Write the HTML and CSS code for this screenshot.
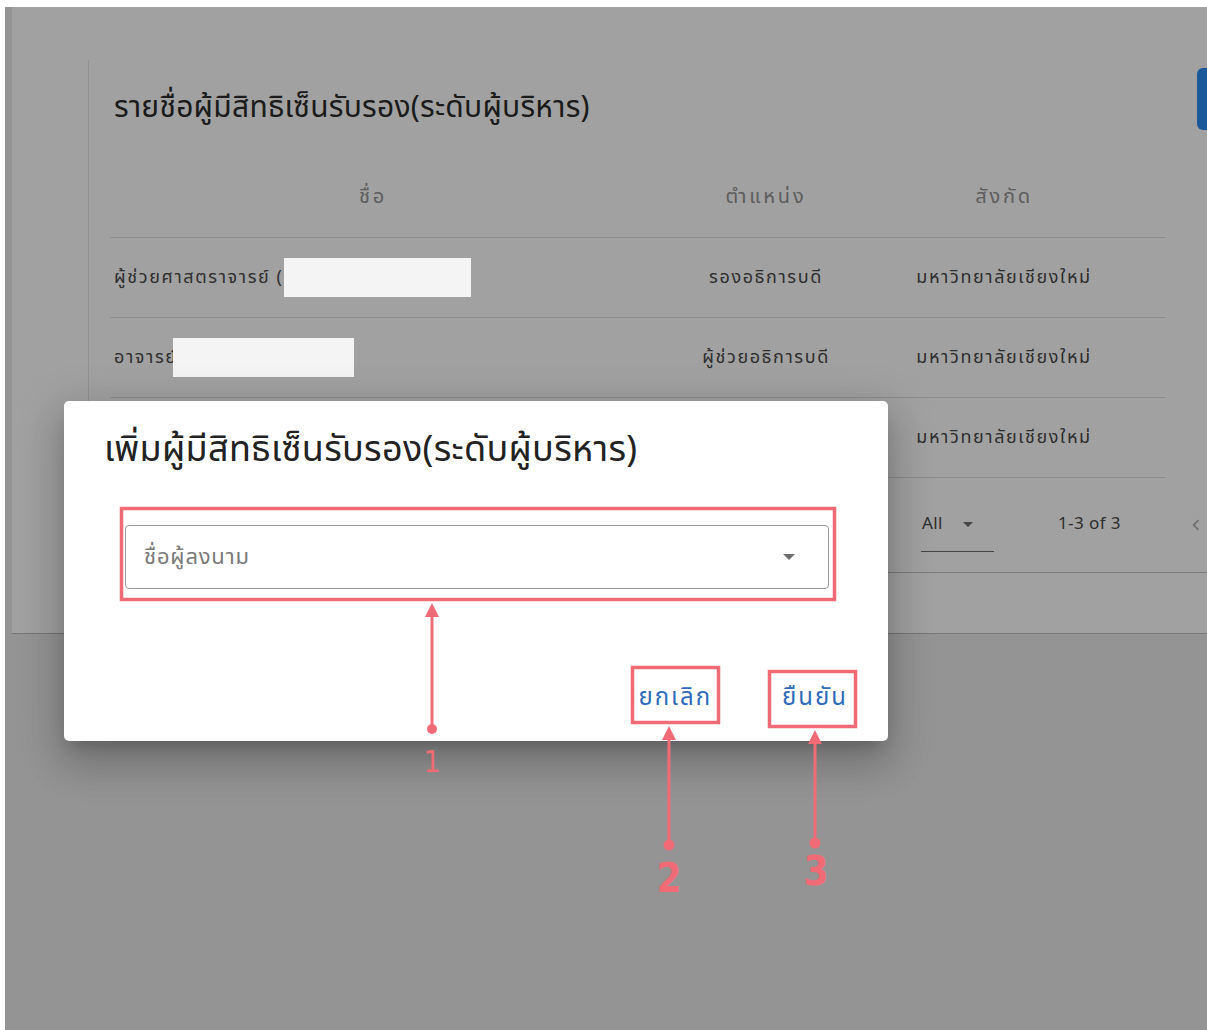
FILE: index.html
```html
<!DOCTYPE html>
<html lang="th">
<head>
<meta charset="utf-8">
<title>ผู้มีสิทธิเซ็นรับรอง</title>
<link rel="stylesheet" href="styles.css">
</head>
<body>
<div class="screen">
  <div class="panel">
    <section class="list-card">
      <header class="list-head">
        <h2 class="list-title">รายชื่อผู้มีสิทธิเซ็นรับรอง(ระดับผู้บริหาร)</h2>
        <button class="add-btn" type="button"></button>
      </header>
      <table class="signers">
        <thead>
          <tr>
            <th class="c-name">ชื่อ</th>
            <th class="c-pos">ตำแหน่ง</th>
            <th class="c-org">สังกัด</th>
            <th class="c-act"></th>
          </tr>
        </thead>
        <tbody>
          <tr>
            <td class="c-name">ผู้ช่วยศาสตราจารย์ (<span class="mask mask-a"></span></td>
            <td class="c-pos">รองอธิการบดี</td>
            <td class="c-org">มหาวิทยาลัยเชียงใหม่</td>
            <td class="c-act"></td>
          </tr>
          <tr>
            <td class="c-name">อาจารย์<span class="mask mask-b"></span></td>
            <td class="c-pos">ผู้ช่วยอธิการบดี</td>
            <td class="c-org">มหาวิทยาลัยเชียงใหม่</td>
            <td class="c-act"></td>
          </tr>
          <tr>
            <td class="c-name"></td>
            <td class="c-pos"></td>
            <td class="c-org">มหาวิทยาลัยเชียงใหม่</td>
            <td class="c-act"></td>
          </tr>
        </tbody>
      </table>
      <footer class="list-foot">
        <div class="per-page"><span>All</span><i class="caret"></i></div>
        <div class="range">1-3 of 3</div>
        <div class="pager">
          <svg viewBox="0 0 24 24" width="22" height="22"><path d="M15.4 7.4 14 6l-6 6 6 6 1.4-1.4L10.8 12z" fill="#b4b4b4"/></svg>
        </div>
      </footer>
    </section>
  </div>

  <div class="scrim"></div>

  <div class="dialog">
    <h3 class="dialog-title">เพิ่มผู้มีสิทธิเซ็นรับรอง(ระดับผู้บริหาร)</h3>
    <div class="dialog-body">
      <div class="field">
        <span class="field-label">ชื่อผู้ลงนาม</span>
        <i class="field-caret"></i>
      </div>
    </div>
    <div class="dialog-actions">
      <button class="text-btn" type="button">ยกเลิก</button>
      <button class="text-btn" type="button">ยืนยัน</button>
    </div>
  </div>
</div>

<svg class="marks" width="1207" height="1030" viewBox="0 0 1207 1030">
  <g fill="none" stroke="#f06b76" stroke-width="3.5">
    <rect x="121.5" y="508.5" width="713" height="91"/>
    <rect x="632.5" y="667.5" width="86" height="55"/>
    <rect x="769.5" y="671.5" width="86" height="55"/>
  </g>
  <g stroke="#f06b76" stroke-width="3">
    <line x1="432" y1="614" x2="432" y2="727"/>
    <line x1="669" y1="738" x2="669" y2="843"/>
    <line x1="815" y1="742" x2="815" y2="841"/>
  </g>
  <g fill="#f06b76">
    <path d="M432 603 L439 617 L425 617 Z"/>
    <path d="M669 726 L676 740 L662 740 Z"/>
    <path d="M815 730 L822 744 L808 744 Z"/>
    <circle cx="432" cy="729" r="5"/>
    <circle cx="669" cy="845" r="5.5"/>
    <circle cx="815" cy="843" r="5.5"/>
  </g>
  <g class="num" fill="#f06b76" text-anchor="middle">
    <text x="432" y="772" font-size="30">1</text>
    <text x="669" y="892" font-size="40" font-weight="700">2</text>
    <text x="816" y="885" font-size="40" font-weight="700">3</text>
  </g>
</svg>
</body>
</html>
```

FILE: styles.css
```css
html, body {
  margin: 0;
  padding: 0;
  background: #ffffff;
}

body {
  position: relative;
  width: 1207px;
  height: 1030px;
  overflow: hidden;
  font-family: "Noto Sans Thai", "Noto Sans Thai UI", "Kanit", "Prompt", "Sarabun", "Garuda", "Loma", "Noto Sans", sans-serif;
  color: #3a3a3a;
}

.screen {
  position: relative;
  margin: 7px 0 0 5px;
  width: 1202px;
  height: 1023px;
  background: #ebebeb;
  overflow: hidden;
}

/* page card behind the modal */
.panel {
  margin-left: 7px;
  height: 573px;
  padding: 53px 0 0 76px;
  background: #ffffff;
  border-bottom: 1px solid #bcbcbc;
}

.list-card {
  width: 1200px;
  height: 512px;
  display: flex;
  flex-direction: column;
  border-left: 1px solid #e6e6e6;
  border-bottom: 1px solid #c4c4c4;
}

.list-head {
  display: flex;
  justify-content: space-between;
  align-items: flex-start;
  height: 62px;
  flex-shrink: 0;
  padding: 8px 2px 0 25px;
}

.list-title {
  margin: 0;
  padding-top: 23px;
  font-size: 30px;
  line-height: 34px;
  font-weight: 400;
  color: #2c2c2c;
  letter-spacing: 0.25px;
}

.add-btn {
  width: 90px;
  height: 62px;
  border: none;
  border-radius: 6px;
  background: #2a8df2;
}

.signers {
  flex-shrink: 0;
  margin: 27px 0 0 21px;
  width: 1055px;
  border-collapse: collapse;
  table-layout: fixed;
  font-size: 18px;
  letter-spacing: 1.6px;
}

.signers th,
.signers td {
  box-sizing: border-box;
  height: 80px;
  padding: 0 4px;
  border-bottom: 1px solid #dcdcdc;
  font-weight: 400;
  white-space: nowrap;
}

.signers th {
  color: #949494;
  font-size: 20px;
  letter-spacing: 2.8px;
  text-align: center;
}

.signers td {
  color: #4a4a4a;
}

.c-name { width: 526px; }
.c-pos { width: 260px; text-align: center; }
.c-org { width: 216px; text-align: center; }
.c-act { width: 53px; }

td.c-name { text-align: left; }

/* privacy blocks over personal names */
.mask {
  position: relative;
  z-index: 3;
  display: inline-block;
  vertical-align: middle;
  height: 39px;
  background: #f4f4f4;
}

.mask-a { width: 187px; }
.mask-b { width: 181px; margin-left: -5px; }

.list-foot {
  display: flex;
  align-items: center;
  height: 92px;
  flex-shrink: 0;
  padding-left: 832px;
  font-size: 17px;
  letter-spacing: 0.4px;
  color: #4a4a4a;
}

.per-page {
  display: flex;
  align-items: center;
  gap: 20px;
  width: 73px;
  height: 40px;
  padding: 0 0 14px 1px;
  box-sizing: border-box;
  border-bottom: 1px solid #6a6a6a;
  align-self: flex-start;
  margin-top: 34px;
}

.caret {
  display: inline-block;
  border-left: 5px solid transparent;
  border-right: 5px solid transparent;
  border-top: 5px solid #707070;
}

.range {
  margin-left: 64px;
}

.pager {
  margin-left: 64px;
  display: flex;
  margin-top: 2px;
}

.scrim {
  position: absolute;
  inset: 0;
  z-index: 2;
  background: rgba(0, 0, 0, 0.37);
}

/* modal */
.dialog {
  position: absolute;
  z-index: 5;
  left: 59px;
  top: 394px;
  width: 824px;
  height: 340px;
  box-sizing: border-box;
  background: #ffffff;
  border-radius: 5px;
  box-shadow: 0 11px 15px -7px rgba(0,0,0,.2), 0 24px 38px 3px rgba(0,0,0,.14), 0 9px 46px 8px rgba(0,0,0,.12);
  display: flex;
  flex-direction: column;
}

.dialog-title {
  margin: 0;
  padding: 29px 40px 0;
  font-size: 36px;
  line-height: 40px;
  font-weight: 400;
  color: #222222;
  letter-spacing: 0.3px;
}

.dialog-body {
  padding: 55px 0 0 61px;
}

.field {
  display: flex;
  align-items: center;
  justify-content: space-between;
  width: 704px;
  height: 64px;
  box-sizing: border-box;
  padding: 0 33px 0 18px;
  border: 1px solid #9a9a9a;
  border-radius: 4px;
}

.field-label {
  font-size: 22px;
  letter-spacing: 0.8px;
  color: #7a7a7a;
}

.field-caret {
  display: inline-block;
  border-left: 6px solid transparent;
  border-right: 6px solid transparent;
  border-top: 6px solid #6e6e6e;
}

.dialog-actions {
  margin-top: auto;
  display: flex;
  justify-content: flex-end;
  gap: 50px;
  padding: 0 30px 21px 0;
}

.text-btn {
  height: 44px;
  padding: 0 10px;
  border: none;
  background: transparent;
  font-family: inherit;
  font-size: 24px;
  letter-spacing: 2px;
  color: #2f6bb8;
}

.marks {
  position: absolute;
  left: 0;
  top: 0;
  z-index: 10;
  pointer-events: none;
}

.num text {
  font-family: "DejaVu Sans Condensed", "DejaVu Sans", sans-serif;
}
```
